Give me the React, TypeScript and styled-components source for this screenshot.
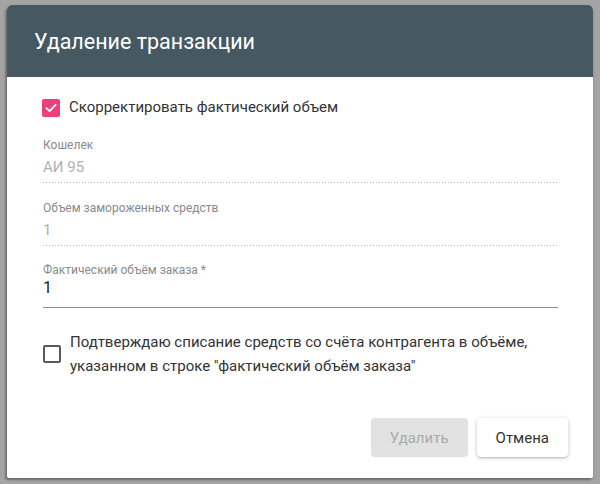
import React from "react";
import styled, { createGlobalStyle } from "styled-components";

const GlobalStyle = createGlobalStyle`
  html, body {
    margin: 0;
    padding: 0;
    background: #a4a4a4;
  }
  body {
    font-family: Roboto, "Noto Sans", "Liberation Sans", sans-serif;
  }
`;

const Backdrop = styled.div`
  width: 600px;
  height: 484px;
  box-sizing: border-box;
  padding: 5px 7px 6px 7px;
  background: #a4a4a4;
`;

const Dialog = styled.div`
  width: 586px;
  height: 473px;
  display: flex;
  flex-direction: column;
  background: #fff;
  border-radius: 5px 5px 2px 2px;
  overflow: hidden;
  box-shadow: -2px 2px 2px rgba(0, 0, 0, 0.25), 0 1px 3px rgba(0, 0, 0, 0.2);
`;

const Header = styled.div`
  height: 72px;
  flex-shrink: 0;
  display: flex;
  align-items: center;
  padding: 0 27px;
  background: #465862;
`;

const Title = styled.h2`
  margin: 0;
  color: #fff;
  font-size: 21.5px;
  font-weight: 400;
`;

const Body = styled.div`
  flex: 1;
  display: flex;
  flex-direction: column;
  padding: 18px 35px 21px 35px;
`;

const CheckRow = styled.label<{ $top?: number }>`
  display: flex;
  align-items: center;
  gap: 9px;
  margin-top: ${(p) => p.$top ?? 0}px;
  color: #333;
  font-size: 15px;
  line-height: 25px;
`;

const Box = styled.span<{ $checked?: boolean }>`
  width: 18px;
  height: 18px;
  flex-shrink: 0;
  box-sizing: border-box;
  border-radius: 2px;
  display: flex;
  align-items: center;
  justify-content: center;
  margin-left: ${(p) => (p.$checked ? 0 : 1)}px;
  background: ${(p) => (p.$checked ? "#ec407a" : "#fff")};
  border: ${(p) => (p.$checked ? "none" : "2px solid #5a5a5a")};
`;

// read-only fields get a dotted rule, the editable one a solid underline
const Field = styled.div<{ $top: number; $readOnly?: boolean }>`
  display: flex;
  flex-direction: column;
  margin-top: ${(p) => p.$top}px;
  margin-left: 1px;
  padding-bottom: ${(p) => (p.$readOnly ? 6 : 9)}px;
  ${(p) =>
    p.$readOnly
      ? `background: linear-gradient(to right, #b4b4b4 1px, transparent 1px) left bottom / 3px 1px repeat-x;`
      : `border-bottom: 1px solid #8e8e8e;`}
`;

const FieldLabel = styled.span`
  font-size: 12px;
  line-height: 14px;
  color: #8a8a8a;
`;

const FieldValue = styled.span<{ $muted?: boolean }>`
  margin-top: ${(p) => (p.$muted ? 5 : 1)}px;
  font-size: ${(p) => (p.$muted ? 15 : 16)}px;
  line-height: 20px;
  color: ${(p) => (p.$muted ? "#b0b0b0" : "#222")};
`;

const ConfirmText = styled.span`
  margin-top: 1px;
  line-height: 24px;
`;

const Actions = styled.div`
  margin-top: auto;
  display: flex;
  justify-content: flex-end;
  gap: 9px;
  margin-right: -10px;
`;

const Button = styled.button<{ $disabled?: boolean }>`
  height: 39px;
  padding: 0 19px;
  border: none;
  border-radius: 4px;
  font-family: inherit;
  font-size: 15px;
  cursor: ${(p) => (p.$disabled ? "default" : "pointer")};
  background: ${(p) => (p.$disabled ? "#e2e2e2" : "#fff")};
  color: ${(p) => (p.$disabled ? "#ababab" : "#333")};
  box-shadow: ${(p) =>
    p.$disabled
      ? "none"
      : "0 1px 4px rgba(0,0,0,0.22), 0 1px 1px rgba(0,0,0,0.12)"};
`;

const Tick = () => (
  <svg width="14" height="14" viewBox="0 0 14 14">
    <path
      d="M2.5 7.2 L5.6 10.2 L11.6 3.8"
      fill="none"
      stroke="#fff"
      strokeWidth="1.8"
      strokeLinecap="round"
      strokeLinejoin="round"
    />
  </svg>
);

const fields = [
  { label: "Кошелек", value: "АИ 95", readOnly: true, top: 18 },
  { label: "Объем замороженных средств", value: "1", readOnly: true, top: 18 },
  { label: "Фактический объём заказа *", value: "1", readOnly: false, top: 17 },
];

const App = () => (
  <>
    <GlobalStyle />
    <Backdrop>
      <Dialog>
        <Header>
          <Title>Удаление транзакции</Title>
        </Header>
        <Body>
          <CheckRow>
            <Box $checked>
              <Tick />
            </Box>
            Скорректировать фактический объем
          </CheckRow>
          {fields.map((f) => (
            <Field key={f.label} $top={f.top} $readOnly={f.readOnly}>
              <FieldLabel>{f.label}</FieldLabel>
              <FieldValue $muted={f.readOnly}>{f.value}</FieldValue>
            </Field>
          ))}
          <CheckRow $top={21}>
            <Box />
            <ConfirmText>
              Подтверждаю списание средств со счёта контрагента в объёме,
              <br />
              указанном в строке "фактический объём заказа"
            </ConfirmText>
          </CheckRow>
          <Actions>
            <Button $disabled>Удалить</Button>
            <Button>Отмена</Button>
          </Actions>
        </Body>
      </Dialog>
    </Backdrop>
  </>
);

export default App;
